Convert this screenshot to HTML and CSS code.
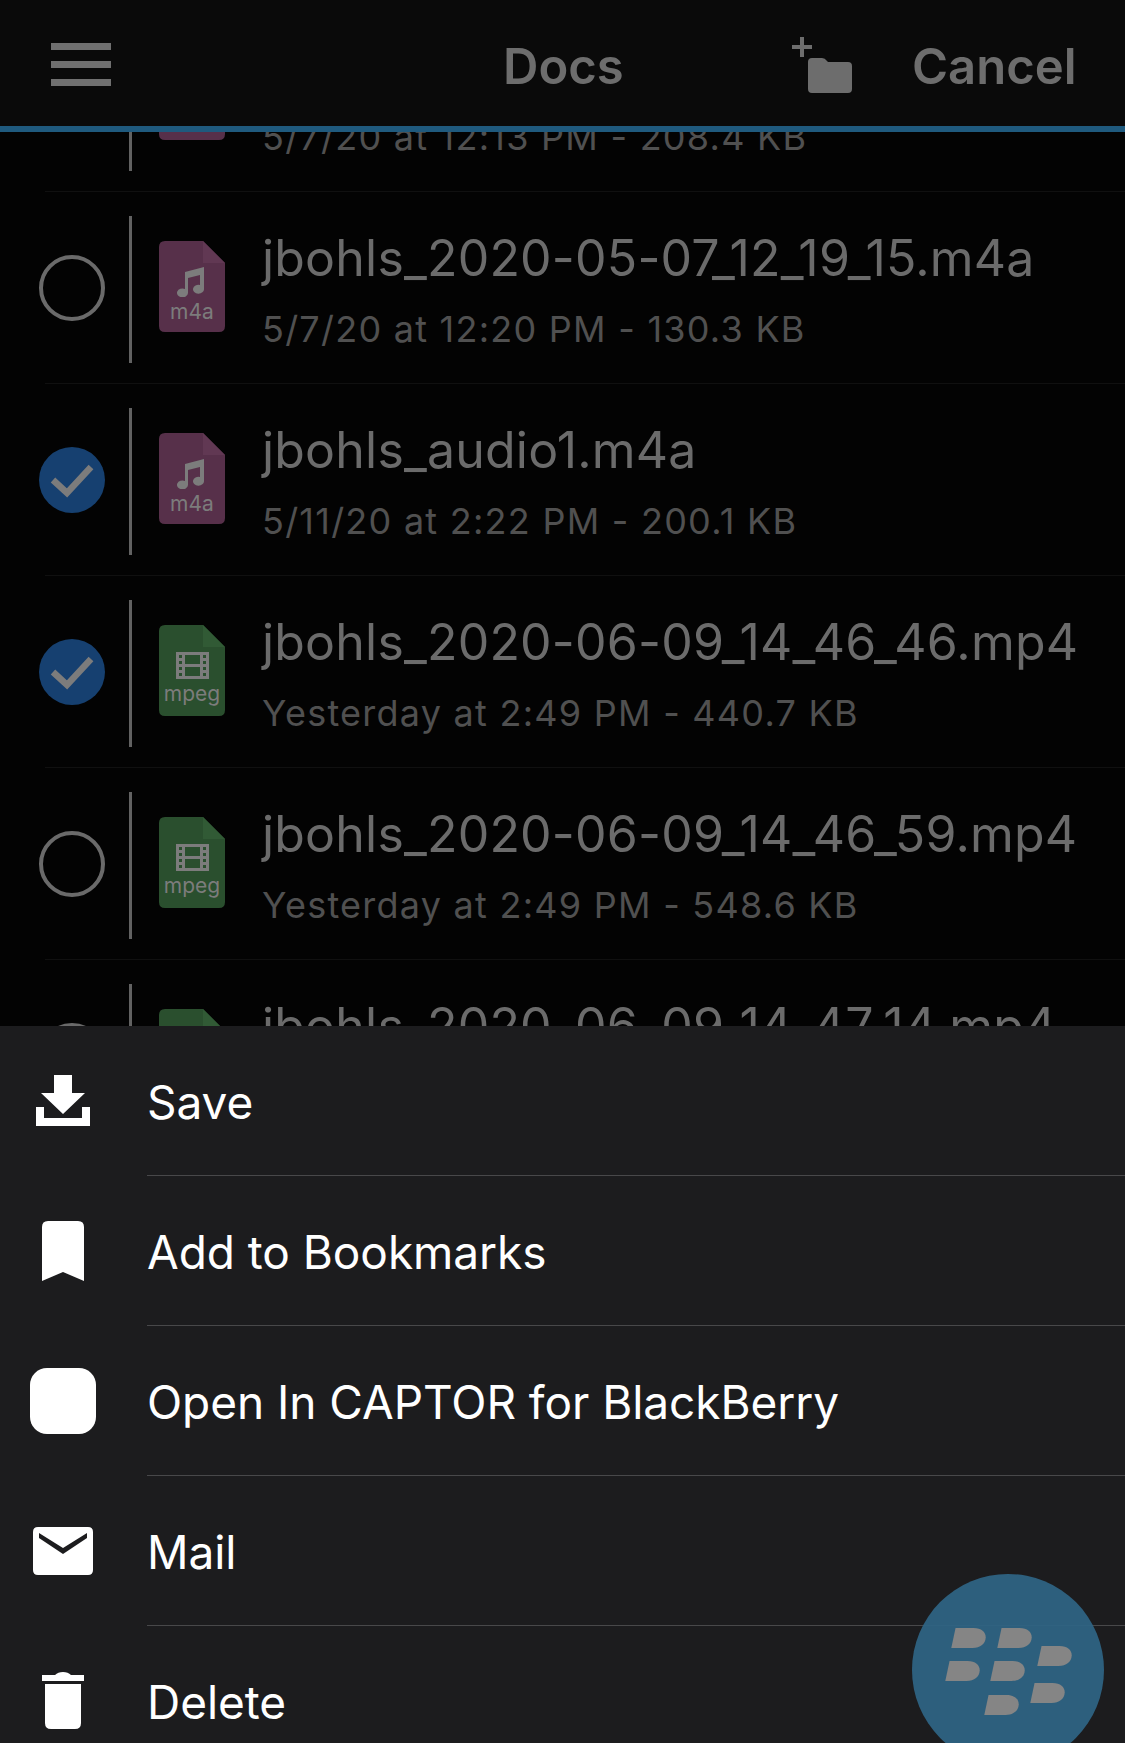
FILE: index.html
```html
<!DOCTYPE html>
<html>
<head>
    <title>Docs</title>
    <link rel="stylesheet" href="styles.css">
</head>
<body>
    <svg class="sprites" width="0" height="0">
        <symbol id="note" viewBox="0 0 28 30">
            <path d="M8 5 L27 0 V22 A5.5 4.4 0 1 1 23 18 V8 L11 11 V26 A5.5 4.4 0 1 1 8 22 Z"/>
        </symbol>
        <symbol id="film" viewBox="0 0 33 27">
            <path fill-rule="evenodd" d="M0 0H33V27H0Z M3 3V6H6V3Z M3 9V12H6V9Z M3 15V18H6V15Z M3 21V24H6V21Z M27 3V6H30V3Z M27 9V12H30V9Z M27 15V18H30V15Z M27 21V24H30V21Z M9 3V12H24V3Z M9 15V24H24V15Z"/>
        </symbol>
        <symbol id="check" viewBox="0 0 66 66">
            <path d="M14 33 L28 46 L52 20" fill="none" stroke="#7c7c7c" stroke-width="6.5"/>
        </symbol>
        <symbol id="bbdash" viewBox="0 0 105 61">
            <path d="M13 0H68C92 0 105 13 105 28C105 48 88 61 65 61H0Z"/>
        </symbol>
    </svg>

    <div class="screen">
        <div class="top-bar">
            <div class="menu-icon"><span></span><span></span><span></span></div>
            <div class="top-title">Docs</div>
            <svg class="new-folder" viewBox="0 0 60 56" width="60" height="56">
                <path d="M16 0H20V8H28V12H20V20H16V12H8V8H16Z"/>
                <path d="M24 25Q24 21 28 21H38Q41 21 43 24L44 25H64Q68 25 68 29V52Q68 56 64 56H28Q24 56 24 52Z"/>
            </svg>
            <div class="top-action">Cancel</div>
        </div>

        <div class="file-list">
            <div class="file-rows">
                <div class="file-row">
                    <div class="radio"></div>
                    <div class="row-rule"></div>
                    <svg class="file-icon music" viewBox="0 0 66 91"><path class="sheet-body" d="M6 0H44L66 22V85Q66 91 60 91H6Q0 91 0 85V6Q0 0 6 0Z"/></svg>
                    <div class="file-text">
                        <div class="file-name"></div>
                        <div class="file-meta">5/7/20 at 12:13 PM - 208.4 KB</div>
                    </div>
                </div>
                <div class="file-row">
                    <div class="radio"></div>
                    <div class="row-rule"></div>
                    <svg class="file-icon music" viewBox="0 0 66 91">
                        <path class="sheet-body" d="M6 0H44L66 22V85Q66 91 60 91H6Q0 91 0 85V6Q0 0 6 0Z"/>
                        <path class="sheet-fold" d="M44 0L66 22H44Z"/>
                        <use href="#note" x="18" y="26" width="28" height="30"/>
                        <text x="33" y="78" class="file-ext">m4a</text>
                    </svg>
                    <div class="file-text">
                        <div class="file-name">jbohls_2020-05-07_12_19_15.m4a</div>
                        <div class="file-meta">5/7/20 at 12:20 PM - 130.3 KB</div>
                    </div>
                </div>
                <div class="file-row">
                    <div class="radio checked"><svg viewBox="0 0 66 66"><use href="#check"/></svg></div>
                    <div class="row-rule"></div>
                    <svg class="file-icon music" viewBox="0 0 66 91">
                        <path class="sheet-body" d="M6 0H44L66 22V85Q66 91 60 91H6Q0 91 0 85V6Q0 0 6 0Z"/>
                        <path class="sheet-fold" d="M44 0L66 22H44Z"/>
                        <use href="#note" x="18" y="26" width="28" height="30"/>
                        <text x="33" y="78" class="file-ext">m4a</text>
                    </svg>
                    <div class="file-text">
                        <div class="file-name">jbohls_audio1.m4a</div>
                        <div class="file-meta">5/11/20 at 2:22 PM - 200.1 KB</div>
                    </div>
                </div>
                <div class="file-row">
                    <div class="radio checked"><svg viewBox="0 0 66 66"><use href="#check"/></svg></div>
                    <div class="row-rule"></div>
                    <svg class="file-icon video" viewBox="0 0 66 91">
                        <path class="sheet-body" d="M6 0H44L66 22V85Q66 91 60 91H6Q0 91 0 85V6Q0 0 6 0Z"/>
                        <path class="sheet-fold" d="M44 0L66 22H44Z"/>
                        <use href="#film" x="17" y="27" width="33" height="27"/>
                        <text x="33" y="76" class="file-ext">mpeg</text>
                    </svg>
                    <div class="file-text">
                        <div class="file-name">jbohls_2020-06-09_14_46_46.mp4</div>
                        <div class="file-meta">Yesterday at 2:49 PM - 440.7 KB</div>
                    </div>
                </div>
                <div class="file-row">
                    <div class="radio"></div>
                    <div class="row-rule"></div>
                    <svg class="file-icon video" viewBox="0 0 66 91">
                        <path class="sheet-body" d="M6 0H44L66 22V85Q66 91 60 91H6Q0 91 0 85V6Q0 0 6 0Z"/>
                        <path class="sheet-fold" d="M44 0L66 22H44Z"/>
                        <use href="#film" x="17" y="27" width="33" height="27"/>
                        <text x="33" y="76" class="file-ext">mpeg</text>
                    </svg>
                    <div class="file-text">
                        <div class="file-name">jbohls_2020-06-09_14_46_59.mp4</div>
                        <div class="file-meta">Yesterday at 2:49 PM - 548.6 KB</div>
                    </div>
                </div>
                <div class="file-row">
                    <div class="radio"></div>
                    <div class="row-rule"></div>
                    <svg class="file-icon video" viewBox="0 0 66 91">
                        <path class="sheet-body" d="M6 0H44L66 22V85Q66 91 60 91H6Q0 91 0 85V6Q0 0 6 0Z"/>
                        <path class="sheet-fold" d="M44 0L66 22H44Z"/>
                    </svg>
                    <div class="file-text">
                        <div class="file-name">jbohls_2020-06-09_14_47_14.mp4</div>
                        <div class="file-meta"></div>
                    </div>
                </div>
            </div>
        </div>

        <div class="action-sheet">
            <div class="action">
                <div class="action-icon">
                    <svg viewBox="0 0 54 51" width="54" height="51">
                        <path d="M18 0H36V18H49L27 39L5 18H18Z"/>
                        <path d="M0 32H8V43H46V32H54V51H0Z"/>
                    </svg>
                </div>
                <div class="action-label">Save</div>
            </div>
            <div class="action">
                <div class="action-icon">
                    <svg viewBox="0 0 42 60" width="42" height="60">
                        <path d="M6 0H36Q42 0 42 6V60L21 51L0 60V6Q0 0 6 0Z"/>
                    </svg>
                </div>
                <div class="action-label">Add to Bookmarks</div>
            </div>
            <div class="action">
                <div class="action-icon"><div class="app-tile"></div></div>
                <div class="action-label">Open In CAPTOR for BlackBerry</div>
            </div>
            <div class="action">
                <div class="action-icon">
                    <svg viewBox="0 0 60 48" width="60" height="48">
                        <path fill-rule="evenodd" d="M5 0H55Q60 0 60 5V43Q60 48 55 48H5Q0 48 0 43V5Q0 0 5 0Z M6 6V11L30 27L54 11V6L30 21Z"/>
                    </svg>
                </div>
                <div class="action-label">Mail</div>
            </div>
            <div class="action">
                <div class="action-icon">
                    <svg viewBox="0 0 42 57" width="42" height="57">
                        <path d="M0 3H13Q16 0 21 0Q26 0 29 3H42V9H0Z"/>
                        <path d="M3 12H39V51Q39 57 33 57H9Q3 57 3 51Z"/>
                    </svg>
                </div>
                <div class="action-label">Delete</div>
            </div>
        </div>

        <div class="bb-button">
            <svg viewBox="0 0 192 192" width="192" height="192">
                <use href="#bbdash" width="35" height="20" transform="translate(39 54)"/>
                <use href="#bbdash" width="35" height="20" transform="translate(85 54)"/>
                <use href="#bbdash" width="35" height="20" transform="translate(125 72)"/>
                <use href="#bbdash" width="35" height="20" transform="translate(33 87)"/>
                <use href="#bbdash" width="35" height="20" transform="translate(78 87)"/>
                <use href="#bbdash" width="35" height="20" transform="translate(118 109)"/>
                <use href="#bbdash" width="35" height="20" transform="translate(72 121)"/>
            </svg>
        </div>
    </div>
</body>
</html>
```

FILE: styles.css
```css
body {
    margin: 0;
    background-color: #000;
    font-family: Inter, "Noto Sans", sans-serif;
}

.sprites {
    display: block;
    height: 0;
}

.screen {
    position: relative;
    display: flex;
    flex-direction: column;
    width: 1125px;
    height: 1743px;
    overflow: hidden;
    background-color: #030303;
}

/* top bar */
.top-bar {
    display: flex;
    flex: none;
    align-items: center;
    height: 126px;
    padding-left: 51px;
    background-color: #0a0a0a;
    border-bottom: 6px solid #1f5a7e;
    color: #6d6d6d;
    font-size: 49px;
    font-weight: 600;
}

.menu-icon {
    display: flex;
    flex-direction: column;
    gap: 11px;
    width: 60px;
    margin-top: 3px;
    margin-right: 392px;
}

.menu-icon span {
    display: block;
    height: 7px;
    background-color: #707070;
}

.top-title {
    width: 118px;
    margin-top: 7px;
    margin-right: 163px;
}

.new-folder {
    flex: none;
    width: 60px;
    margin-top: 4px;
    overflow: visible;
    fill: #6d6d6d;
}

.top-action {
    margin-top: 7px;
    margin-left: 68px;
}

/* file list */
.file-list {
    flex: 1;
    min-height: 0;
    overflow: hidden;
}

.file-rows {
    margin-top: -132px;
}

.file-row {
    position: relative;
    display: flex;
    align-items: center;
    height: 192px;
    padding-left: 39px;
    box-sizing: border-box;
}

.file-row::after {
    content: "";
    position: absolute;
    left: 45px;
    right: 0;
    bottom: 0;
    height: 1px;
    background-color: #101010;
}

.radio {
    flex: none;
    width: 66px;
    height: 66px;
    box-sizing: border-box;
    border: 4px solid #6a6a6a;
    border-radius: 50%;
}

.radio.checked {
    background-color: #164070;
    border: none;
}

.radio svg {
    display: block;
    width: 66px;
    height: 66px;
}

.row-rule {
    flex: none;
    width: 3px;
    height: 147px;
    margin: 2px 27px 0 24px;
    background-color: #626262;
}

.file-icon {
    flex: none;
    width: 66px;
    height: 91px;
    margin: -3px 37px 0 0;
    fill: #7c7c7c;
}

.music .sheet-body { fill: #57304a; }
.music .sheet-fold { fill: #613853; }
.video .sheet-body { fill: #2a4f2e; }
.video .sheet-fold { fill: #315a35; }

.file-ext {
    font-family: Inter, sans-serif;
    font-size: 21px;
    text-anchor: middle;
    fill: #7c7c7c;
}

.file-text {
    margin-top: 8px;
}

.file-name {
    height: 62px;
    margin-top: -8px;
    color: #6b6b6b;
    font-size: 50px;
    line-height: 62px;
    letter-spacing: 0.2px;
    white-space: nowrap;
}

.file-meta {
    height: 40px;
    margin-top: 20px;
    color: #505050;
    font-size: 36px;
    line-height: 40px;
    letter-spacing: 1.25px;
    white-space: nowrap;
}

/* action sheet */
.action-sheet {
    flex: none;
    height: 717px;
    overflow: hidden;
    background-color: #1c1c1e;
    color: #fff;
}

.action {
    display: flex;
    height: 150px;
}

.action-icon {
    display: flex;
    flex: none;
    align-items: center;
    justify-content: center;
    width: 126px;
    margin-bottom: 1px;
    fill: #fff;
}

.app-tile {
    width: 66px;
    height: 66px;
    background-color: #fff;
    border-radius: 17px;
}

.action-label {
    display: flex;
    flex: 1;
    align-items: center;
    margin-left: 21px;
    padding-top: 2px;
    font-size: 46px;
    letter-spacing: -0.05px;
    border-bottom: 1px solid #48484a;
}

.bb-button {
    position: absolute;
    right: 21px;
    bottom: -23px;
    width: 192px;
    height: 192px;
    border-radius: 50%;
    background-color: rgba(47, 100, 132, 0.94);
    fill: #858585;
}
```
